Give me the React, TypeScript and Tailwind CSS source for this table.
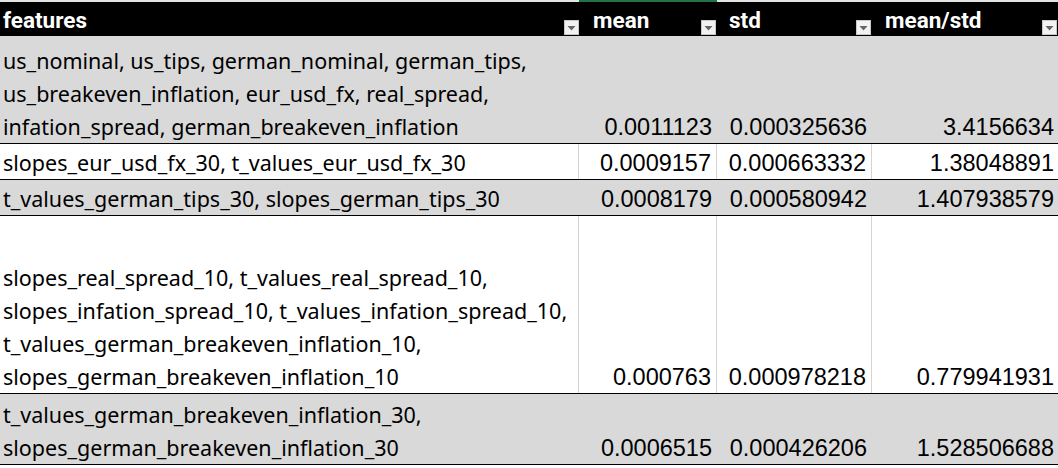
import React from "react";

const rows = [
  {
    lines: [
      "us_nominal, us_tips, german_nominal, german_tips,",
      "us_breakeven_inflation, eur_usd_fx, real_spread,",
      "infation_spread, german_breakeven_inflation",
    ],
    mean: "0.0011123",
    std: "0.000325636",
    ratio: "3.4156634",
    gray: true,
    h: "h-[108px]",
  },
  {
    lines: ["slopes_eur_usd_fx_30, t_values_eur_usd_fx_30"],
    mean: "0.0009157",
    std: "0.000663332",
    ratio: "1.38048891",
    gray: false,
    h: "h-[36px]",
  },
  {
    lines: ["t_values_german_tips_30, slopes_german_tips_30"],
    mean: "0.0008179",
    std: "0.000580942",
    ratio: "1.407938579",
    gray: true,
    h: "h-[36px]",
  },
  {
    lines: [
      "slopes_real_spread_10, t_values_real_spread_10,",
      "slopes_infation_spread_10, t_values_infation_spread_10,",
      "t_values_german_breakeven_inflation_10,",
      "slopes_german_breakeven_inflation_10",
    ],
    mean: "0.000763",
    std: "0.000978218",
    ratio: "0.779941931",
    gray: false,
    h: "h-[178px]",
  },
  {
    lines: [
      "t_values_german_breakeven_inflation_30,",
      "slopes_german_breakeven_inflation_30",
    ],
    mean: "0.0006515",
    std: "0.000426206",
    ratio: "1.528506688",
    gray: true,
    h: "h-[71px]",
  },
];

function FilterBtn() {
  return (
    <div className="w-[15px] h-[15px] bg-[#f2f2f2] border border-[#c8c8c8] flex items-center justify-center">
      <svg width="9" height="6" viewBox="0 0 9 6">
        <polygon points="0.5,1 8.5,1 4.5,5.5" fill="#666666" />
      </svg>
    </div>
  );
}

export default function App() {
  const cols = "grid grid-cols-[579px_138px_155px_186px]";
  return (
    <div className="w-[1058px] h-[468px] bg-white overflow-hidden">
      <div className="flex h-[2px]">
        <div className="w-[579px] bg-[#e3e3e3]" />
        <div className="w-[138px] bg-[#217346]" />
        <div className="flex-1 bg-[#e3e3e3]" />
      </div>
      <div className={`${cols} h-[34px] bg-black text-white font-bold text-[22.5px] font-['Roboto',sans-serif]`}>
        <div className="flex items-end justify-between pl-[3px]">
          <span className="leading-[31px]">features</span>
          <div className="mb-[1px]"><FilterBtn /></div>
        </div>
        <div className="flex items-end justify-between pl-[14px]">
          <span className="leading-[31px]">mean</span>
          <div className="mb-[1px] mr-[1px]"><FilterBtn /></div>
        </div>
        <div className="flex items-end justify-between pl-[12px]">
          <span className="leading-[31px]">std</span>
          <div className="mb-[1px] mr-[1px]"><FilterBtn /></div>
        </div>
        <div className="flex items-end justify-between pl-[13px]">
          <span className="leading-[31px]">mean/std</span>
          <div className="mb-[1px] mr-[1px]"><FilterBtn /></div>
        </div>
      </div>
      {rows.map((r, i) => (
        <div
          key={i}
          className={`${cols} ${r.h} border-b border-black ${r.gray ? "bg-[#d9d9d9]" : "bg-white"} text-black`}
        >
          <div className={`flex flex-col justify-end pl-[3px] font-['Noto_Sans',sans-serif] text-[21.5px] leading-[33px] ${r.gray ? "" : "border-r border-[#d4d4d4]"}`}>
            {r.lines.map((l, j) => (
              <div key={j} className="whitespace-nowrap">{l}</div>
            ))}
          </div>
          <div className={`flex items-end justify-end pr-[5px] font-['Liberation_Sans',sans-serif] text-[23.5px] leading-[32px] ${r.gray ? "" : "border-r border-[#d4d4d4]"}`}>
            {r.mean}
          </div>
          <div className={`flex items-end justify-end pr-[5px] font-['Liberation_Sans',sans-serif] text-[23.5px] leading-[32px] ${r.gray ? "" : "border-r border-[#d4d4d4]"}`}>
            {r.std}
          </div>
          <div className="flex items-end justify-end pr-[4px] font-['Liberation_Sans',sans-serif] text-[23.5px] leading-[32px]">
            {r.ratio}
          </div>
        </div>
      ))}
    </div>
  );
}
